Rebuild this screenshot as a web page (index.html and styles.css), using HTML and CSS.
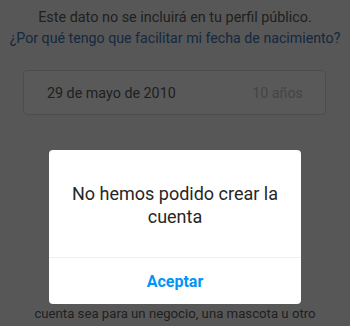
FILE: index.html
```html
<!DOCTYPE html>
<html lang="es">
<head>
    <meta charset="UTF-8">
    <meta name="viewport" content="width=device-width, initial-scale=1.0">
    <title>Fecha de nacimiento</title>
    <link rel="stylesheet" href="styles.css">
</head>
<body>
    <div class="page">
        <p class="note">Este dato no se incluirá en tu perfil público.</p>
        <a class="why" href="#">¿Por qué tengo que facilitar mi fecha de nacimiento?</a>

        <div class="date-field">
            <span class="date">29 de mayo de 2010</span>
            <span class="age">10 años</span>
        </div>

        <p class="hint">
            Usa tu fecha de nacimiento aunque la<br>
            cuenta sea para un negocio, una mascota u otro<br>
            propósito.
        </p>
    </div>

    <div class="overlay">
        <div class="dialog">
            <h3 class="dialog-title">No hemos podido crear la cuenta</h3>
            <button class="dialog-btn">Aceptar</button>
        </div>
    </div>
</body>
</html>
```

FILE: styles.css
```css
body {
    margin: 0;
    padding: 0;
    font-family: Roboto, "Liberation Sans", sans-serif;
    background-color: #fafafa;
    color: #5c5c5c;
    width: 350px;
    height: 326px;
    overflow: hidden;
}
.page {
    padding: 7px 0 0;
    text-align: center;
}
.note {
    margin: 0;
    font-size: 14.4px;
    line-height: 21px;
}
.why {
    display: block;
    font-size: 14.2px;
    line-height: 21px;
    color: #3a74b4;
    text-decoration: none;
}
.date-field {
    display: flex;
    justify-content: space-between;
    align-items: center;
    margin: 21px 24px 0 23px;
    height: 43px;
    padding: 0 22px 0 23px;
    background-color: #fff;
    border: 1px solid #dbdbdb;
    border-radius: 4px;
    font-size: 14.3px;
}
.age {
    color: #c4c4c4;
}
.hint {
    margin: 170px 0 0;
    font-size: 13.2px;
    line-height: 19px;
}
.overlay {
    position: absolute;
    top: 0;
    left: 0;
    width: 350px;
    height: 326px;
    background-color: rgba(0, 0, 0, 0.65);
}
.dialog {
    position: absolute;
    top: 150px;
    left: 49px;
    width: 252px;
    background-color: #fff;
    border-radius: 4px;
    display: flex;
    flex-direction: column;
}
.dialog-title {
    margin: 0;
    padding: 32px 14px 28px;
    min-height: 47px;
    font-size: 18px;
    font-weight: normal;
    line-height: 23px;
    color: #262626;
    text-align: center;
    border-bottom: 1px solid #efefef;
}
.dialog-btn {
    height: 46px;
    border: none;
    background: none;
    font-family: inherit;
    font-size: 16px;
    font-weight: bold;
    color: #0095f6;
    cursor: pointer;
}
```
